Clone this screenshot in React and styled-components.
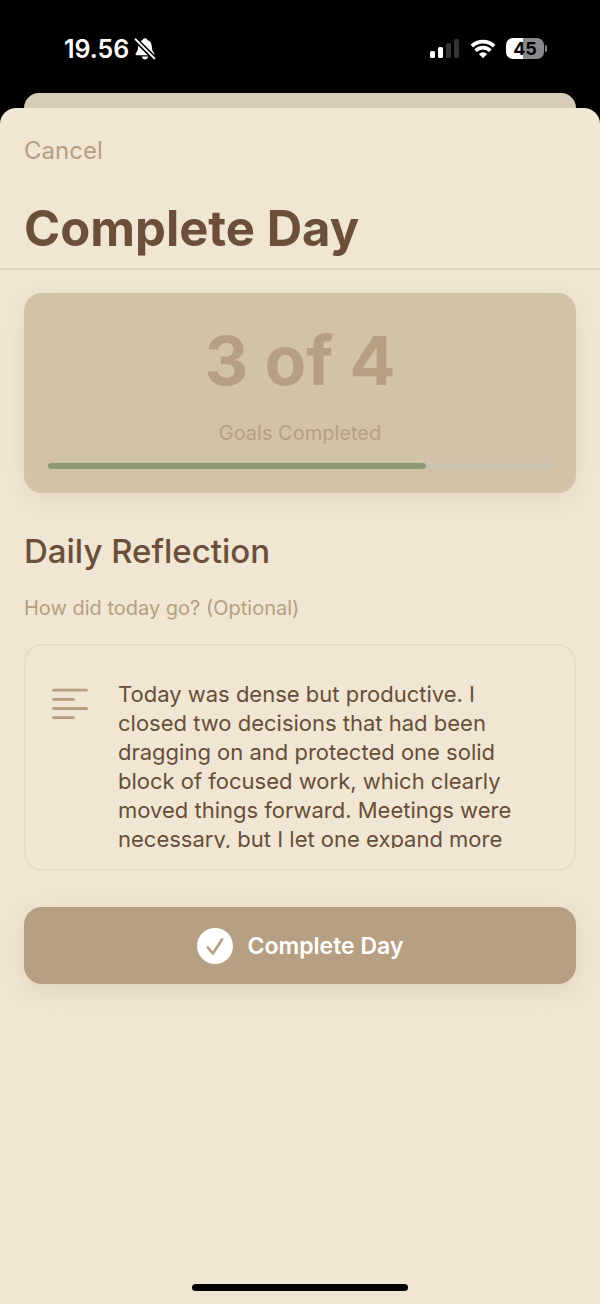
import React, { useState } from 'react'
import styled, { createGlobalStyle } from "styled-components";

const GOALS_DONE = 3
const GOALS_TOTAL = 4

function App() {
    const [reflection, setReflection] = useState(
        "Today was dense but productive. I closed two decisions that had been dragging on and protected one solid block of focused work, which clearly moved things forward. Meetings were necessary, but I let one expand more"
    )

    return (
        <Screen>
            <GlobalStyle />
            <StatusBar>
                <Clock>
                    <p>19.56</p>
                    <BellOffIcon />
                </Clock>
                <StatusIcons>
                    <SignalIcon />
                    <WifiIcon />
                    <Battery>
                        <BatteryLevel>45</BatteryLevel>
                        <BatteryTip />
                    </Battery>
                </StatusIcons>
            </StatusBar>

            <BackSheet />
            <Sheet>
                <Header>
                    <CancelBtn type="button">Cancel</CancelBtn>
                    <h1>Complete Day</h1>
                </Header>

                <Content>
                    <GoalsCard>
                        <GoalsCount>{GOALS_DONE} of {GOALS_TOTAL}</GoalsCount>
                        <GoalsLabel>Goals Completed</GoalsLabel>
                        <Track>
                            <Fill style={{ width: `${(GOALS_DONE / GOALS_TOTAL) * 100}%` }} />
                        </Track>
                    </GoalsCard>

                    <SectionTitle>Daily Reflection</SectionTitle>
                    <Hint htmlFor="reflection">How did today go? (Optional)</Hint>
                    <Field>
                        <TextIcon />
                        <textarea
                            id="reflection"
                            spellCheck={false}
                            value={reflection}
                            onChange={(e) => setReflection(e.target.value)}
                        />
                    </Field>

                    <SubmitBtn type="button">
                        <CheckIcon />
                        <span>Complete Day</span>
                    </SubmitBtn>
                </Content>

                <HomeIndicator />
            </Sheet>
        </Screen>
    )
}

const BellOffIcon = () => (
    <svg width="22" height="24" viewBox="0 0 22 24" aria-hidden="true">
        <path d="M11 1.2c1.3 0 2.2.8 2.4 1.9 2.9.9 4.3 3.4 4.4 6.4.1 3.6.9 5 2.2 6.5.9 1 .5 2.2-.8 2.2H2.8c-1.3 0-1.7-1.2-.8-2.2 1.3-1.500 2.1-2.9 2.2-6.5.1-3 1.5-5.5 4.4-6.4C8.800 2 9.7 1.2 11 1.2z" fill="#fff" />
        <path d="M7.8 19.6h6.4c-.2 1.7-1.5 2.9-3.2 2.9s-3-1.2-3.2-2.9z" fill="#fff" />
        <path d="M1.6 2.4 20.4 21.4" stroke="#000" strokeWidth="5" />
        <path d="M1.6 2.4 20.4 21.4" stroke="#fff" strokeWidth="2" strokeLinecap="round" />
    </svg>
)

const SignalIcon = () => (
    <svg width="30" height="20" viewBox="0 0 30 20" aria-hidden="true">
        <rect x="0" y="12" width="5" height="7" rx="1.5" fill="#fff" />
        <rect x="8" y="8" width="5" height="11" rx="1.5" fill="#fff" />
        <rect x="16" y="4" width="5" height="15" rx="1.5" fill="#333" />
        <rect x="24" y="0" width="5" height="19" rx="1.5" fill="#333" />
    </svg>
)

const WifiIcon = () => (
    <svg width="26" height="20" viewBox="0 0 26 20" fill="none" aria-hidden="true">
        <path d="M1.9 7.2a16 16 0 0 1 22.2 0" stroke="#fff" strokeWidth="3.8" />
        <path d="M5.6 11.7a10.5 10.5 0 0 1 14.8 0" stroke="#fff" strokeWidth="3.6" />
        <path d="M13 19.2 8.9 15a5.9 5.9 0 0 1 8.2 0z" fill="#fff" />
    </svg>
)

const TextIcon = () => (
    <svg width="36" height="32" viewBox="0 0 36 32" aria-hidden="true">
        <path
            d="M1.5 2.2H34.5M1.5 11.3H21.5M1.5 20.5H34.5M1.5 29.6H21.5"
            stroke="#b69f82"
            strokeWidth="2.8"
            strokeLinecap="round"
        />
    </svg>
)

const CheckIcon = () => (
    <svg width="36" height="36" viewBox="0 0 36 36" fill="none" aria-hidden="true">
        <circle cx="18" cy="18" r="18" fill="#fff" />
        <path d="M10.8 19.5 15.9 25.5 25.2 11.3" stroke="#b69f82" strokeWidth="2.6" strokeLinecap="round" strokeLinejoin="round" />
    </svg>
)

const GlobalStyle = createGlobalStyle`
    * {
        box-sizing: border-box;
    }
    body {
        margin: 0;
        background: #000;
        font-family: Inter, "Liberation Sans", sans-serif;
    }
    h1, h2, p {
        margin: 0;
    }
    button, textarea {
        font-family: inherit;
        border: none;
        padding: 0;
        background: none;
    }
`
const Screen = styled.main`
    display: flex;
    flex-direction: column;
    min-height: 100vh;
    background: #000;
`
const StatusBar = styled.div`
    display: flex;
    justify-content: space-between;
    align-items: center;
    height: 93px;
    padding: 4px 53px 0 64px;
    color: #fff;
`
const Clock = styled.div`
    display: flex;
    align-items: center;
    gap: 5px;
    font-size: 25px;
    font-weight: 600;
`
const StatusIcons = styled.div`
    display: flex;
    align-items: center;
    gap: 10px;
`
const Battery = styled.div`
    display: flex;
    align-items: center;
    gap: 1px;
`
const BatteryLevel = styled.div`
    width: 38px;
    border-radius: 7px;
    background: linear-gradient(to right, #fff 45%, #8a8a8a 45%);
    color: #000;
    text-align: center;
    font-size: 18px;
    line-height: 21px;
    font-weight: 700;
`
const BatteryTip = styled.div`
    width: 2px;
    height: 7px;
    border-radius: 0 2px 2px 0;
    background: #8a8a8a;
`
const BackSheet = styled.div`
    height: 15px;
    margin: 0 24px;
    border-radius: 15px 15px 0 0;
    background: #d6ccb9;
`
const Sheet = styled.section`
    display: flex;
    flex-direction: column;
    flex: 1;
    border-radius: 16px 16px 0 0;
    background: #f1e6d3;
`
const Header = styled.header`
    padding: 27px 24px 7px;
    border-bottom: 2px solid #ddd1bd;
    & > h1 {
        margin-top: 30px;
        color: #6b4f3b;
        font-size: 49px;
        line-height: 64px;
        font-weight: 700;
    }
`
const CancelBtn = styled.button`
    display: block;
    color: #b69f82;
    font-size: 24px;
    line-height: 32px;
`
const Content = styled.div`
    display: flex;
    flex-direction: column;
    padding: 23px 24px;
`
const GoalsCard = styled.div`
    padding: 24px;
    border-radius: 18px;
    background: #d2c2a8;
    box-shadow: 0 6px 24px rgba(182, 159, 130, 0.2);
    color: #b69f82;
    text-align: center;
`
const GoalsCount = styled.p`
    font-size: 68px;
    line-height: 86px;
    font-weight: 700;
`
const GoalsLabel = styled.p`
    margin: 17px 0;
    font-size: 20px;
    line-height: 26px;
`
const Track = styled.div`
    border-radius: 3px;
    background: #cbc3b3;
`
const Fill = styled.div`
    height: 6px;
    border-radius: 3px;
    background: #8c9a76;
`
const SectionTitle = styled.h2`
    margin-top: 36px;
    color: #6b4f3b;
    font-size: 33px;
    line-height: 44px;
    font-weight: 500;
`
const Hint = styled.label`
    margin: 21px 0 22px;
    color: #b69f82;
    font-size: 20px;
    line-height: 28px;
`
const Field = styled.div`
    display: flex;
    align-items: flex-start;
    gap: 30px;
    padding: 34px 32px 21px 26px;
    border: 2px solid #e7dcc8;
    border-radius: 18px;
    & > svg {
        flex: none;
        margin-top: 8px;
    }
    & > textarea {
        flex: 1;
        min-width: 0;
        height: 168px;
        resize: none;
        overflow: hidden;
        outline: none;
        color: #674e3a;
        font-size: 22px;
        line-height: 29px;
    }
`
const SubmitBtn = styled.button`
    display: flex;
    justify-content: center;
    align-items: center;
    gap: 15px;
    height: 77px;
    margin-top: 36px;
    border-radius: 18px;
    background: #b69f82;
    box-shadow: 0 6px 24px rgba(182, 159, 130, 0.25);
    color: #fff;
    font-size: 23px;
    font-weight: 600;
`
const HomeIndicator = styled.div`
    width: 36%;
    height: 7px;
    margin: auto auto 13px;
    border-radius: 4px;
    background: #000;
`
export default App
